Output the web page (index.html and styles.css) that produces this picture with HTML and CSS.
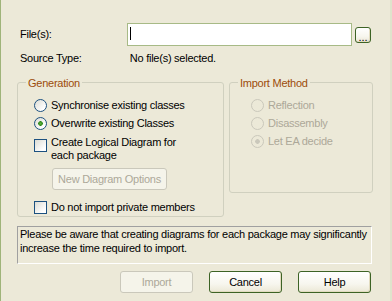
FILE: index.html
```html
<!DOCTYPE html>
<html lang="en">
<head>
    <meta charset="UTF-8">
    <title>Import Source Code</title>
    <link rel="stylesheet" href="styles.css">
</head>
<body>

    <div class="dialog">
        <!-- File picker -->
        <div class="file-row">
            <span class="field-label">File(s):</span>
            <div class="text-input"><span class="caret"></span></div>
            <button class="btn btn-browse">...</button>
        </div>

        <div class="source-row">
            <span class="field-label">Source Type:</span>
            <span>No file(s) selected.</span>
        </div>

        <!-- Option groups -->
        <div class="groups">
            <div class="group group-generation">
                <span class="group-title">Generation</span>
                <div class="option"><span class="radio"></span>Synchronise existing classes</div>
                <div class="option option-gap"><span class="radio checked"></span>Overwrite existing Classes</div>
                <div class="option option-gap option-multi"><span class="checkbox"></span><span>Create Logical Diagram for<br>each package</span></div>
                <button class="btn btn-options" disabled>New Diagram Options</button>
                <div class="option option-gap"><span class="checkbox"></span>Do not import private members</div>
            </div>

            <div class="group group-method">
                <span class="group-title">Import Method</span>
                <div class="option disabled"><span class="radio"></span>Reflection</div>
                <div class="option option-gap disabled"><span class="radio"></span>Disassembly</div>
                <div class="option option-gap disabled"><span class="radio checked"></span>Let EA decide</div>
            </div>
        </div>

        <div class="message">
            Please be aware that creating diagrams for each package may significantly increase the time required to import.
        </div>

        <div class="buttons">
            <button class="btn btn-action" disabled>Import</button>
            <button class="btn btn-action">Cancel</button>
            <button class="btn btn-action">Help</button>
        </div>
    </div>

</body>
</html>
```

FILE: styles.css
```css
body {
    margin: 0;
    background-color: #ece9d8;
    font-family: "Liberation Sans", Arial, sans-serif;
    font-size: 11px;
    line-height: 13px;
    letter-spacing: -0.25px;
    color: #000;
}

.dialog {
    box-sizing: border-box;
    width: 392px;
    height: 301px;
    padding-left: 16px;
    border-left: 1px solid #9fb47a;
    border-right: 2px solid #dfe3cc;
    overflow: hidden;
}

.field-label {
    box-sizing: border-box;
    display: inline-block;
    width: 110px;
    padding-left: 3px;
}

.file-row {
    display: flex;
    align-items: center;
    margin-top: 23px;
    height: 23px;
}

.text-input {
    box-sizing: border-box;
    width: 225px;
    height: 23px;
    border: 1px solid #a7ba86;
    background-color: #fff;
}

.caret {
    display: block;
    width: 1px;
    height: 13px;
    margin: 3px 0 0 2px;
    background-color: #000;
}

.source-row {
    margin-top: 6px;
    height: 13px;
}

/* Buttons */
.btn {
    box-sizing: border-box;
    padding: 0;
    font-family: inherit;
    font-size: 11px;
    letter-spacing: -0.25px;
    color: #000;
    border: 1px solid #3d6325;
    border-radius: 3px;
    background: linear-gradient(#ffffff, #f7f6ee 60%, #ebe8d6);
    box-shadow: inset -1px -1px 0 #e2dcc0;
}

.btn:disabled {
    color: #aca899;
    border-color: #cac8bb;
    background: #f5f4ea;
    box-shadow: none;
}

.btn-browse {
    width: 16px;
    height: 16px;
    margin-left: 3px;
    align-self: flex-start;
    margin-top: 4px;
    line-height: 18px;
    letter-spacing: 0;
}

/* Group boxes */
.groups {
    display: flex;
    align-items: flex-start;
    gap: 5px;
    margin-top: 17px;
}

.group {
    box-sizing: border-box;
    position: relative;
    border: 1px solid #d0d0bf;
    border-radius: 3px;
    padding-top: 16px;
}

.group-title {
    position: absolute;
    top: -6px;
    left: 8px;
    padding: 0 2px;
    background-color: #ece9d8;
    color: #9c4c0a;
}

.group-generation {
    width: 207px;
    height: 135px;
    padding-left: 16px;
}

.group-method {
    width: 144px;
    height: 111px;
    padding-left: 21px;
}

.option {
    display: flex;
    align-items: center;
    gap: 4px;
}

.option-gap {
    margin-top: 5px;
}

.option-multi {
    margin-top: 6px;
    align-items: flex-start;
}

.option-multi .checkbox {
    margin-top: 3px;
}

.option.disabled {
    color: #aca899;
}

.radio,
.checkbox {
    box-sizing: border-box;
    flex: none;
    width: 13px;
    height: 13px;
    border: 1px solid #1c5180;
    background: linear-gradient(135deg, #dcdcd4, #ffffff 80%);
}

.radio {
    border-radius: 50%;
}

.radio.checked {
    background: radial-gradient(circle, #5fb33c 0, #2f8a1d 2px, transparent 2.6px),
                linear-gradient(135deg, #dcdcd4, #ffffff 80%);
}

.disabled .radio {
    border-color: #cac8bb;
    background: #ece9d8;
}

.disabled .radio.checked {
    background: radial-gradient(circle, #cac8bb 0, #cac8bb 2px, transparent 2.6px), #ece9d8;
}

.btn-options {
    width: 115px;
    height: 22px;
    margin: 6px 0 6px 18px;
}

/* Message */
.message {
    box-sizing: border-box;
    width: 355px;
    height: 38px;
    margin-top: 9px;
    padding: 0 2px;
    line-height: 14px;
    border-top: 1px solid #a0a0a0;
    border-left: 1px solid #a0a0a0;
    border-bottom: 1px solid #fff;
    border-right: 1px solid #fff;
}

.buttons {
    display: flex;
    justify-content: flex-end;
    gap: 16px;
    width: 354px;
    margin-top: 7px;
}

.btn-action {
    width: 73px;
    height: 22px;
}
```
